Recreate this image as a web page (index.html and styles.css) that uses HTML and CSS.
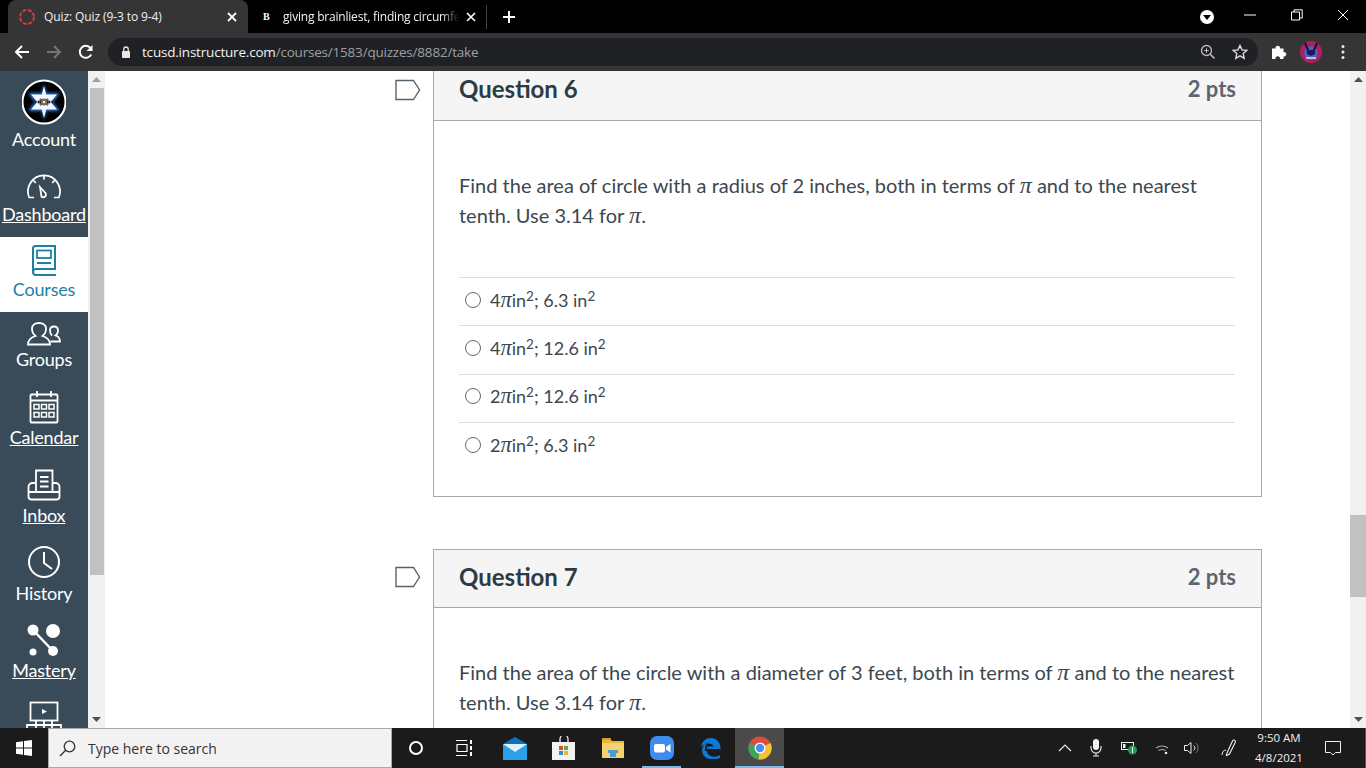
FILE: index.html
```html
<!DOCTYPE html>
<html lang="en">
<head>
<meta charset="utf-8">
<title>Quiz: Quiz (9-3 to 9-4)</title>
<link rel="stylesheet" href="styles.css">
</head>
<body>
<div class="tabstrip">
  <div class="tab tab-active">
    <svg class="favicon" width="18" height="18" viewBox="0 0 18 18"><circle cx="9" cy="9" r="7" fill="none" stroke="#d23f3f" stroke-width="2" stroke-dasharray="4 1.6"/></svg>
    <span class="tab-title">Quiz: Quiz (9-3 to 9-4)</span>
    <svg class="tab-close" width="10" height="10" viewBox="0 0 10 10"><path d="M1 1l8 8M9 1l-8 8" stroke="#fff" stroke-width="1.800"/></svg>
  </div>
  <div class="tab tab-other">
    <span class="brainly">B</span>
    <span class="tab-title">giving brainliest, finding circumference</span>
    <svg class="tab-close" width="10" height="10" viewBox="0 0 10 10"><path d="M1 1l8 8M9 1l-8 8" stroke="#fff" stroke-width="1.600"/></svg>
  </div>
  <svg class="newtab" width="14" height="14" viewBox="0 0 14 14"><path d="M7 1v12M1 7h12" stroke="#fff" stroke-width="2"/></svg>
  <div class="winctl">
    <svg class="caret" width="16" height="16" viewBox="0 0 16 16"><circle cx="8" cy="8" r="7" fill="#fff"/><path d="M4 6h8l-4 5z" fill="#000"/></svg>
    <div class="winbtn"><svg width="12" height="12" viewBox="0 0 12 12"><path d="M0 6h12" stroke="#fff" stroke-width="1"/></svg></div>
    <div class="winbtn"><svg width="12" height="12" viewBox="0 0 12 12"><path d="M.5 3h8v8h-8zM3 3V.8h8.200V9H8.500" fill="none" stroke="#fff" stroke-width="1"/></svg></div>
    <div class="winbtn"><svg width="12" height="12" viewBox="0 0 12 12"><path d="M1 1l10 10M11 1L1 11" stroke="#fff" stroke-width="1"/></svg></div>
  </div>
</div>
<div class="toolbar">
  <div class="tbtn"><svg width="16" height="16" viewBox="0 0 16 16"><path d="M15 8H2M8 2L2 8l6 6" fill="none" stroke="#fff" stroke-width="2"/></svg></div>
  <div class="tbtn"><svg width="16" height="16" viewBox="0 0 16 16"><path d="M1 8h13M8 2l6 6-6 6" fill="none" stroke="#757575" stroke-width="2"/></svg></div>
  <div class="tbtn"><svg width="16" height="16" viewBox="0 0 16 16"><path d="M13.200 10.500A6 6 0 1 1 12.400 3.900" fill="none" stroke="#fff" stroke-width="2"/><path d="M14.500 1v6h-6z" fill="#fff"/></svg></div>
  <div class="omnibox">
    <svg class="lock" width="10" height="12" viewBox="0 0 10 12"><rect x="1" y="5" width="8" height="7" rx="1" fill="#e8e8e8"/><path d="M2.800 5V3.200a2.200 2.200 0 0 1 4.400 0V5" fill="none" stroke="#e8e8e8" stroke-width="1.300"/></svg>
    <span class="url"><span class="host">tcusd.instructure.com</span>/courses/1583/quizzes/8882/take</span>
    <svg class="omni-zoom" width="16" height="16" viewBox="0 0 16 16"><circle cx="6.500" cy="6.500" r="5" fill="none" stroke="#bbb" stroke-width="1.300"/><path d="M10.200 10.200L14.500 14.500" stroke="#bbb" stroke-width="1.600"/><path d="M6.500 4.200v4.600M4.200 6.500h4.600" stroke="#bbb"/></svg>
    <svg class="omni-star" width="16" height="16" viewBox="0 0 16 16"><path d="M8 1.500l2 4.400 4.800.5-3.600 3.200 1 4.700L8 11.900l-4.200 2.400 1-4.700L1.200 6.400 6 5.900z" fill="none" stroke="#ddd" stroke-width="1.400"/></svg>
  </div>
  <div class="tbtn"><svg width="16" height="16" viewBox="0 0 16 16"><path d="M1 4.500h3.500a2.300 2.300 0 1 1 4.500 0h3.500V8a2.300 2.300 0 1 1 0 4.500V15H9a2.300 2.300 0 1 0-4.500 0H1z" fill="#fff"/></svg></div>
  <div class="tbtn"><svg width="24" height="24" viewBox="0 0 24 24"><circle cx="12" cy="12" r="11" fill="#b01f5c"/><circle cx="12" cy="13" r="7" fill="#4a5fc4"/><path d="M6 3l3 7M18 3l-3 7" stroke="#1a1030" stroke-width="2"/><path d="M8 10h8v4l-4 2-4-2z" fill="#1e1a4c"/><path d="M7 18h10" stroke="#c9b4ec" stroke-width="2"/></svg></div>
  <div class="tbtn"><svg width="4" height="16" viewBox="0 0 4 16"><circle cx="2" cy="2.500" r="1.500" fill="#eee"/><circle cx="2" cy="8" r="1.500" fill="#eee"/><circle cx="2" cy="13.500" r="1.500" fill="#eee"/></svg></div>
</div>
<div class="main">
  <nav class="sidenav">
    <a class="navitem">
      <svg width="44" height="56" viewBox="0 0 44 56"><defs><filter id="glow" x="-30%" y="-30%" width="160%" height="160%"><feGaussianBlur stdDeviation="1.500"/></filter></defs><circle cx="22" cy="31" r="21.500" fill="#000" stroke="#fff" stroke-width="2"/><path d="M22 13l6.500 23h-13zM22 49l6.500-23h-13zM6 22h32L22 42zM6 40h32L22 20z" fill="#2f7fe0" filter="url(#glow)"/><path d="M22 15l5 19H17zM22 47l5-19H17zM9 23.500h26L22 39zM9 38.500h26L22 23z" fill="#f4f7ff"/><circle cx="22" cy="31" r="3.500" fill="#7f6a45"/><circle cx="22" cy="31" r="1.300" fill="#dfe6f0"/></svg>
      <span class="navlabel">Account</span>
    </a>
    <a class="navitem navlink">
      <svg width="44" height="40" viewBox="0 0 44 40"><path d="M12 35.500H7.200A16 16 0 1 1 36.800 35.500H32" fill="none" stroke="#fff" stroke-width="1.700"/><path d="M18 25l5.800 6.500a2.800 2.800 0 0 1-4.300 3.200z" fill="none" stroke="#fff" stroke-width="1.700"/><path d="M22 14v3.500M11.500 18.500l2.300 2.300M32.500 18.500l-2.300 2.300" stroke="#fff" stroke-width="1.700"/></svg>
      <span class="navlabel">Dashboard</span>
    </a>
    <a class="navitem navactive">
      <svg width="44" height="40" viewBox="0 0 44 40"><path d="M11 35V11.500A2.500 2.500 0 0 1 13.500 9H33v23H14a3 3 0 0 0-3 3 3 3 0 0 0 3 3h20" fill="none" stroke="#1f7fa5" stroke-width="2"/><rect x="15" y="13.500" width="14" height="7.500" fill="none" stroke="#1f7fa5" stroke-width="1.800"/><path d="M15 26h14" stroke="#1f7fa5" stroke-width="2"/></svg>
      <span class="navlabel">Courses</span>
    </a>
    <a class="navitem">
      <svg width="44" height="35" viewBox="0 0 44 35"><path d="M6 32.500c0-5 3-7 7.500-8.500-2-1.500-3.500-4.500-3.500-7.500 0-3.500 3-5.500 7-5.500s7 2 7 5.500c0 3-1.500 6-3.500 7.500 4.500 1.500 7.500 3.500 7.500 8.500z" fill="none" stroke="#fff" stroke-width="1.800"/><path d="M28.500 29.500h9.500c0-3.500-1.500-5-4.500-6 1.500-1 2.500-3 2.500-5 0-2.500-1.500-4-4-4s-4 1.500-4 4c0 2 .8 3.800 2 5" fill="none" stroke="#fff" stroke-width="1.800"/></svg>
      <span class="navlabel">Groups</span>
    </a>
    <a class="navitem navlink">
      <svg width="44" height="43" viewBox="0 0 44 43"><rect x="8.500" y="12.500" width="27" height="28" rx="1" fill="none" stroke="#fff" stroke-width="1.800"/><path d="M8.500 18.500h27M15 9v6M29 9v6" stroke="#fff" stroke-width="1.800"/><path d="M12 22.500h5v4.500h-5zM19.500 22.500h5v4.500h-5zM27 22.500h5v4.500h-5zM12 30.500h5V35h-5zM19.500 30.500h5V35h-5zM27 30.500h5V35h-5z" fill="none" stroke="#fff" stroke-width="1.500"/></svg>
      <span class="navlabel">Calendar</span>
    </a>
    <a class="navitem navlink">
      <svg width="44" height="43" viewBox="0 0 44 43"><path d="M14 31V10.500h16.500V31" fill="none" stroke="#fff" stroke-width="1.800"/><path d="M18 17h8.500M18 21.500h8.500M18 26.500h8.500" stroke="#fff" stroke-width="1.800"/><path d="M14 23h-3.500a4 4 0 0 0-4 4v9.500a3 3 0 0 0 3 3h25a3 3 0 0 0 3-3V27a4 4 0 0 0-4-4H30M6.500 27v3a2 2 0 0 0 2 2h27a2 2 0 0 0 2-2v-3" fill="none" stroke="#fff" stroke-width="1.800"/></svg>
      <span class="navlabel">Inbox</span>
    </a>
    <a class="navitem">
      <svg width="44" height="43" viewBox="0 0 44 43"><circle cx="22" cy="24" r="15" fill="none" stroke="#fff" stroke-width="2"/><path d="M22 14v11l8 6" fill="none" stroke="#fff" stroke-width="2"/></svg>
      <span class="navlabel">History</span>
    </a>
    <a class="navitem navlink">
      <svg width="44" height="42" viewBox="0 0 44 42"><path d="M11 14l20 21" stroke="#fff" stroke-width="2.500"/><circle cx="11" cy="14" r="5.500" fill="#fff"/><circle cx="31" cy="15" r="7" fill="#fff"/><circle cx="11" cy="36" r="3.500" fill="#fff"/><circle cx="31" cy="35" r="5" fill="#fff"/></svg>
      <span class="navlabel">Mastery</span>
    </a>
    <a class="navitem">
      <svg width="44" height="36" viewBox="0 0 44 36"><rect x="8.500" y="9.500" width="27" height="18" fill="none" stroke="#fff" stroke-width="1.800"/><path d="M20 16l5 2.500-5 2.500z" fill="#fff"/><path d="M5 35v-3h34v3M14 28v7M22 28v7M30 28v7" fill="none" stroke="#fff" stroke-width="1.800"/></svg>
    </a>
  </nav>
  <div class="scrollbar scrollbar-left">
    <svg class="sb-arrow" width="9" height="5" viewBox="0 0 9 5"><path d="M4.500 0L9 5H0z" fill="#a0a0a0"/></svg>
    <div class="sb-thumb thumb-left"></div>
    <svg class="sb-arrow sb-down" width="9" height="5" viewBox="0 0 9 5"><path d="M0 0h9L4.500 5z" fill="#505050"/></svg>
  </div>
  <main class="content">
    <section class="card card-clipped">
      <svg class="flag" width="26" height="22" viewBox="0 0 26 22"><path d="M1 1.500h17.500L24.500 11l-6 9.500H1z" fill="none" stroke="#56636d" stroke-width="1.400"/></svg>
      <header class="card-head"><h2 class="qname">Question 6</h2><span class="qpts">2 pts</span></header>
      <div class="card-body">
        <p class="qtext">Find the area of circle with a radius of 2 inches, both in terms of <i class="pi">π</i> and to the nearest tenth. Use 3.14 for <i class="pi">π</i>.</p>
        <div class="answers">
          <label class="answer"><span class="radio"></span><span>4<i class="pi">π</i>in<sup>2</sup>; 6.3 in<sup>2</sup></span></label>
          <label class="answer"><span class="radio"></span><span>4<i class="pi">π</i>in<sup>2</sup>; 12.6 in<sup>2</sup></span></label>
          <label class="answer"><span class="radio"></span><span>2<i class="pi">π</i>in<sup>2</sup>; 12.6 in<sup>2</sup></span></label>
          <label class="answer"><span class="radio"></span><span>2<i class="pi">π</i>in<sup>2</sup>; 6.3 in<sup>2</sup></span></label>
        </div>
      </div>
    </section>
    <section class="card">
      <svg class="flag" width="26" height="22" viewBox="0 0 26 22"><path d="M1 1.500h17.500L24.500 11l-6 9.500H1z" fill="none" stroke="#56636d" stroke-width="1.400"/></svg>
      <header class="card-head"><h2 class="qname">Question 7</h2><span class="qpts">2 pts</span></header>
      <div class="card-body">
        <p class="qtext">Find the area of the circle with a diameter of 3 feet, both in terms of <i class="pi">π</i> and to the nearest tenth. Use 3.14 for <i class="pi">π</i>.</p>
      </div>
    </section>
  </main>
  <div class="scrollbar scrollbar-right">
    <svg class="sb-arrow" width="9" height="5" viewBox="0 0 9 5"><path d="M4.500 0L9 5H0z" fill="#505050"/></svg>
    <div class="sb-thumb thumb-right"></div>
    <svg class="sb-arrow sb-down" width="9" height="5" viewBox="0 0 9 5"><path d="M0 0h9L4.500 5z" fill="#505050"/></svg>
  </div>
</div>
<footer class="taskbar">
  <div class="start"><svg width="16" height="16" viewBox="0 0 16 16"><path d="M0 2.200L7 1.200V7.500H0zM8 1L16 0v7.500H8zM0 8.500h7v6.300L0 13.800zM8 8.500h8V16L8 15z" fill="#fff"/></svg></div>
  <div class="searchbox">
    <svg width="17" height="17" viewBox="0 0 17 17"><circle cx="10.500" cy="6.500" r="5.300" fill="none" stroke="#333" stroke-width="1.300"/><path d="M6.700 10.300L1 16" stroke="#333" stroke-width="1.400"/></svg>
    <span class="searchtext">Type here to search</span>
  </div>
  <div class="taskicon task-nudge"><svg width="14" height="14" viewBox="0 0 14 14"><circle cx="7" cy="7" r="6" fill="none" stroke="#fff" stroke-width="2"/></svg></div>
  <div class="taskicon task-nudge"><svg width="17" height="16" viewBox="0 0 17 16"><path d="M0 .5h11M0 15.500h11M1 4.500h10v7H1z" fill="none" stroke="#fff" stroke-width="1.200"/><path d="M14 0h2v4h-2zM14 6h2v4h-2zM14 12h2v4h-2z" fill="#fff"/></svg></div>
  <div class="taskicon"><svg width="24" height="23" viewBox="0 0 24 23"><path d="M0 7l12-7 12 7-12 8z" fill="#0f6fc0"/><rect y="7" width="24" height="16" fill="#2aa0e8"/><path d="M0 7h24l-12 8z" fill="#dff1fd"/></svg></div>
  <div class="taskicon"><svg width="24" height="24" viewBox="0 0 24 24"><path d="M8 6V3a4 4 0 0 1 8 0v3" fill="none" stroke="#eee" stroke-width="1.300"/><rect y="6" width="23" height="18" fill="#f2f2f2"/><rect x="7" y="10" width="4" height="4" fill="#d8502a"/><rect x="12" y="10" width="4" height="4" fill="#6aa83a"/><rect x="7" y="15" width="4" height="4" fill="#2d8fd5"/><rect x="12" y="15" width="4" height="4" fill="#f0b429"/></svg></div>
  <div class="taskicon"><svg width="22" height="20" viewBox="0 0 22 20"><path d="M0 1h8l2 2h12v17H0z" fill="#e8b73f"/><path d="M0 5h22v15H0z" fill="#f5d36b"/><path d="M6 12h10v3h-2v4H8v-4H6z" fill="#4a9ad4"/><rect y="0" width="9" height="1.500" fill="#c99a2e"/></svg></div>
  <div class="taskicon taskopen"><svg width="24" height="24" viewBox="0 0 24 24"><rect width="24" height="24" rx="7" fill="#3f8cef"/><rect x="4" y="8" width="11" height="8.500" rx="2" fill="#fff"/><path d="M16 11l4.500-3v8.500L16 13.500z" fill="#fff"/></svg></div>
  <div class="taskicon"><svg width="20" height="21" viewBox="0 0 20 21"><path d="M6 11h13.500C20 5 16 0 10 0 5 0 1 3 0 9c3-4 11-5 12.500-.5H6zM6 13c0 5 7 7.500 13 4v3c-6 3-18 2-18-8 0-3 2-6 5-7-1.200 1.500-2 4-2 8z" fill="#0a78d4"/></svg></div>
  <div class="taskicon taskchrome"><svg width="24" height="24" viewBox="0 0 24 24"><circle cx="12" cy="12" r="11.500" fill="#dd4b3d"/><path d="M12 12L1.500 7a11.500 11.500 0 0 0 9 16.400z" fill="#3ba55c"/><path d="M12 12l10.500-5a11.500 11.500 0 0 1-12 16.400z" fill="#f4c430"/><circle cx="12" cy="12" r="5.500" fill="#fff"/><circle cx="12" cy="12" r="4.200" fill="#4a8ef0"/></svg></div>
  <div class="tray">
    <svg class="tray-i" width="14" height="8" viewBox="0 0 14 8"><path d="M1 7l6-6 6 6" fill="none" stroke="#e8e8e8" stroke-width="1.200"/></svg>
    <svg class="tray-i tray-mic" width="12" height="18" viewBox="0 0 12 18"><rect x="3" y="0" width="6" height="11" rx="3" fill="#f0f0f0"/><path d="M1 7v2a5 5 0 0 0 10 0V7M6 14v3M3 17h6" fill="none" stroke="#f0f0f0" stroke-width="1.100"/></svg>
    <svg class="tray-i tray-batt" width="16" height="14" viewBox="0 0 16 14"><rect x=".5" y="1.500" width="12" height="7" fill="none" stroke="#eee"/><rect x="2" y="3" width="2.500" height="4" fill="#eee"/><circle cx="11.500" cy="9" r="4.500" fill="#1f9d4d"/><path d="M11.500 6v6" stroke="#fff"/></svg>
    <svg class="tray-i tray-wifi" width="14" height="13" viewBox="0 0 14 13"><path d="M1 6a11 11 0 0 1 12 0M3.500 8.500a7 7 0 0 1 7 0" fill="none" stroke="#aaa" stroke-width="1.100"/><circle cx="11" cy="11" r="1.300" fill="#eee"/></svg>
    <svg class="tray-i tray-vol" width="16" height="14" viewBox="0 0 16 14"><path d="M.5 4.500h3L7 1.500v11l-3.500-3h-3z" fill="none" stroke="#eee"/><path d="M9.500 4.500a3 3 0 0 1 0 5" fill="none" stroke="#eee"/><path d="M12 2a7 7 0 0 1 0 10" fill="none" stroke="#777"/></svg>
    <svg class="tray-i tray-pen" width="16" height="18" viewBox="0 0 16 18"><path d="M6 14L11.500 2a1.500 1.500 0 0 1 2.800 1.200L8.500 15 5.500 16.500z" fill="none" stroke="#eee" stroke-width="1.100"/><path d="M1 16c0-3 2-5 4-5" fill="none" stroke="#eee"/></svg>
    <div class="clock"><div>9:50 AM</div><div>4/8/2021</div></div>
    <svg class="notify" width="16" height="15" viewBox="0 0 16 15"><path d="M.5.500h15v11h-5l-2.500 2.500-2.500-2.500h-5z" fill="none" stroke="#f0f0f0"/></svg>
  </div>
</footer>
</body>
</html>
```

FILE: styles.css
```css
* { box-sizing: border-box; }
html, body { margin: 0; height: 100%; overflow: hidden; }
body { width: 1366px; height: 768px; display: flex; flex-direction: column; background: #fff; font-family: "Lato", sans-serif; color: #2d3b45; }

.tabstrip { height: 33px; background: #000; display: flex; align-items: center; padding-left: 8px; font-family: "Open Sans", sans-serif; font-size: 12px; color: #f0f0f0; flex: none; }
.tab { display: flex; align-items: center; height: 33px; position: relative; }
.tab-active { width: 240px; background: #353535; border-radius: 8px 8px 0 0; padding-left: 10px; }
.tab-active .tab-title { margin-left: 8px; width: 180px; }
.tab-active .tab-close { margin-left: 3px; }
.tab-other { width: 239px; padding-left: 15px; border-right: 1px solid #444; height: 24px; }
.brainly { width: 10px; font: 700 10px "Liberation Serif", serif; color: #fff; }
.tab-other .tab-title { margin-left: 10px; width: 176px; white-space: nowrap; overflow: hidden; letter-spacing: -.2px; -webkit-mask-image: linear-gradient(to right, #000 90%, transparent 100%); mask-image: linear-gradient(to right, #000 90%, transparent 100%); }
.tab-other .tab-close { margin-left: 7px; }
.tab-title { letter-spacing: -.1px; }
.newtab { margin-left: 15px; }
.winctl { margin-left: auto; display: flex; align-items: center; }
.caret { margin-right: 12px; margin-top: 1px; }
.winbtn { width: 46.300px; height: 33px; display: flex; align-items: center; justify-content: center; margin-top: -4px; }

.toolbar { height: 38px; background: #353535; display: flex; align-items: center; padding-left: 6px; padding-right: 6px; flex: none; }
.tbtn { width: 32px; height: 32px; display: flex; align-items: center; justify-content: center; flex: none; }
.omnibox { width: 1150px; height: 28px; margin: 0 5px 0 6px; border-radius: 14px; background: #202124; display: flex; align-items: center; padding-left: 13px; flex: none; }
.url { margin-left: 11px; font-family: "Open Sans", sans-serif; font-size: 13.500px; color: #9aa0a6; letter-spacing: -.2px; }
.host { color: #f1f3f4; }
.omni-zoom { margin-left: auto; }
.omni-star { margin: 0 10px 0 16px; }

.main { height: 657px; display: flex; overflow: hidden; flex: none; }
.sidenav { width: 88px; background: #394b58; overflow: hidden; flex: none; }
.navitem { display: flex; flex-direction: column; align-items: center; padding-bottom: 11px; color: #fff; }
.navlabel { font-size: 18px; line-height: 24px; white-space: nowrap; letter-spacing: -.2px; }
.navlink .navlabel { text-decoration: underline; }
.navactive { background: #fff; color: #1f7fa5; }

.scrollbar { width: 16px; background: #f1f1f1; display: flex; flex-direction: column; align-items: center; flex: none; position: relative; }
.scrollbar-left { width: 17px; }
.sb-arrow { margin-top: 6px; flex: none; }
.sb-down { position: absolute; bottom: 6px; left: 4px; margin: 0; }
.sb-thumb { background: #c1c1c1; flex: none; }
.thumb-left { width: 14px; height: 487px; margin-top: 6px; }
.thumb-right { width: 16px; height: 82px; margin-top: 433px; }

.content { flex: 1; background: #fff; padding-left: 328px; overflow: hidden; }
.card { width: 829px; border: 1px solid #a9a9a9; position: relative; margin-bottom: 52px; }
.card-clipped { margin-top: -9px; }
.flag { position: absolute; left: -39px; top: 16px; }
.card-head { height: 58px; background: #f5f5f5; border-bottom: 1px solid #a9a9a9; display: flex; justify-content: space-between; align-items: center; padding: 0 25px 5px; }
.card-clipped .card-head { padding-bottom: 7px; }
.qname { margin: 0; font-size: 24px; font-weight: 700; color: #2d3b45; }
.qpts { font-size: 22px; font-weight: 700; color: #5a6670; }
.card-body { padding: 49px 26px 26px 25px; }
.qtext { margin: 0 0 47px; font-size: 20px; line-height: 30px; color: #3c4850; }
.pi { font-family: "Liberation Serif", serif; font-style: italic; line-height: 0; font-size: 1.200em; }
.answers { display: flex; flex-direction: column; }
.answer { height: 48.300px; border-top: 1px solid #dcdcdc; display: flex; align-items: center; padding-bottom: 4px; font-size: 18px; color: #3c4850; }
.answer .pi { font-size: 1.250em; }
.answer sup { font-size: 13.500px; line-height: 0; vertical-align: 6px; }
.radio { width: 16px; height: 16px; border: 1px solid #666; border-radius: 50%; background: #fff; margin: 0 9px 0 6px; flex: none; }

.taskbar { height: 40px; background: #1b1b1b; display: flex; align-items: center; flex: none; }
.start { width: 48px; height: 40px; display: flex; align-items: center; justify-content: center; }
.searchbox { width: 344px; height: 40px; background: #f2f2f2; border: 1px solid #a8a8a8; display: flex; align-items: center; padding-left: 10px; font-family: "Open Sans", sans-serif; font-size: 14px; color: #333; }
.searchtext { margin-left: 12px; }
.taskicon { width: 49px; height: 40px; display: flex; align-items: center; justify-content: center; flex: none; position: relative; }
.task-nudge svg { margin-right: 2px; }
.taskopen::after { content: ""; position: absolute; left: 5px; right: 5px; bottom: 0; height: 2px; background: #76b9ed; }
.taskchrome { background: #4a4a4a; box-shadow: inset 0 -2px 0 #76b9ed; }
.tray { margin-left: auto; display: flex; align-items: center; height: 40px; padding-right: 4px; border-right: 1px solid #555; color: #f0f0f0; font-family: "Open Sans", sans-serif; font-size: 11.500px; }
.tray-mic { margin-left: 18px; }
.tray-batt { margin-left: 19px; }
.tray-wifi { margin-left: 18px; }
.tray-vol { margin-left: 15px; }
.tray-pen { margin-left: 21px; }
.clock { text-align: center; width: 68px; line-height: 20px; margin-left: 8px; }
.notify { margin: 0 20px 0 12px; }
```
